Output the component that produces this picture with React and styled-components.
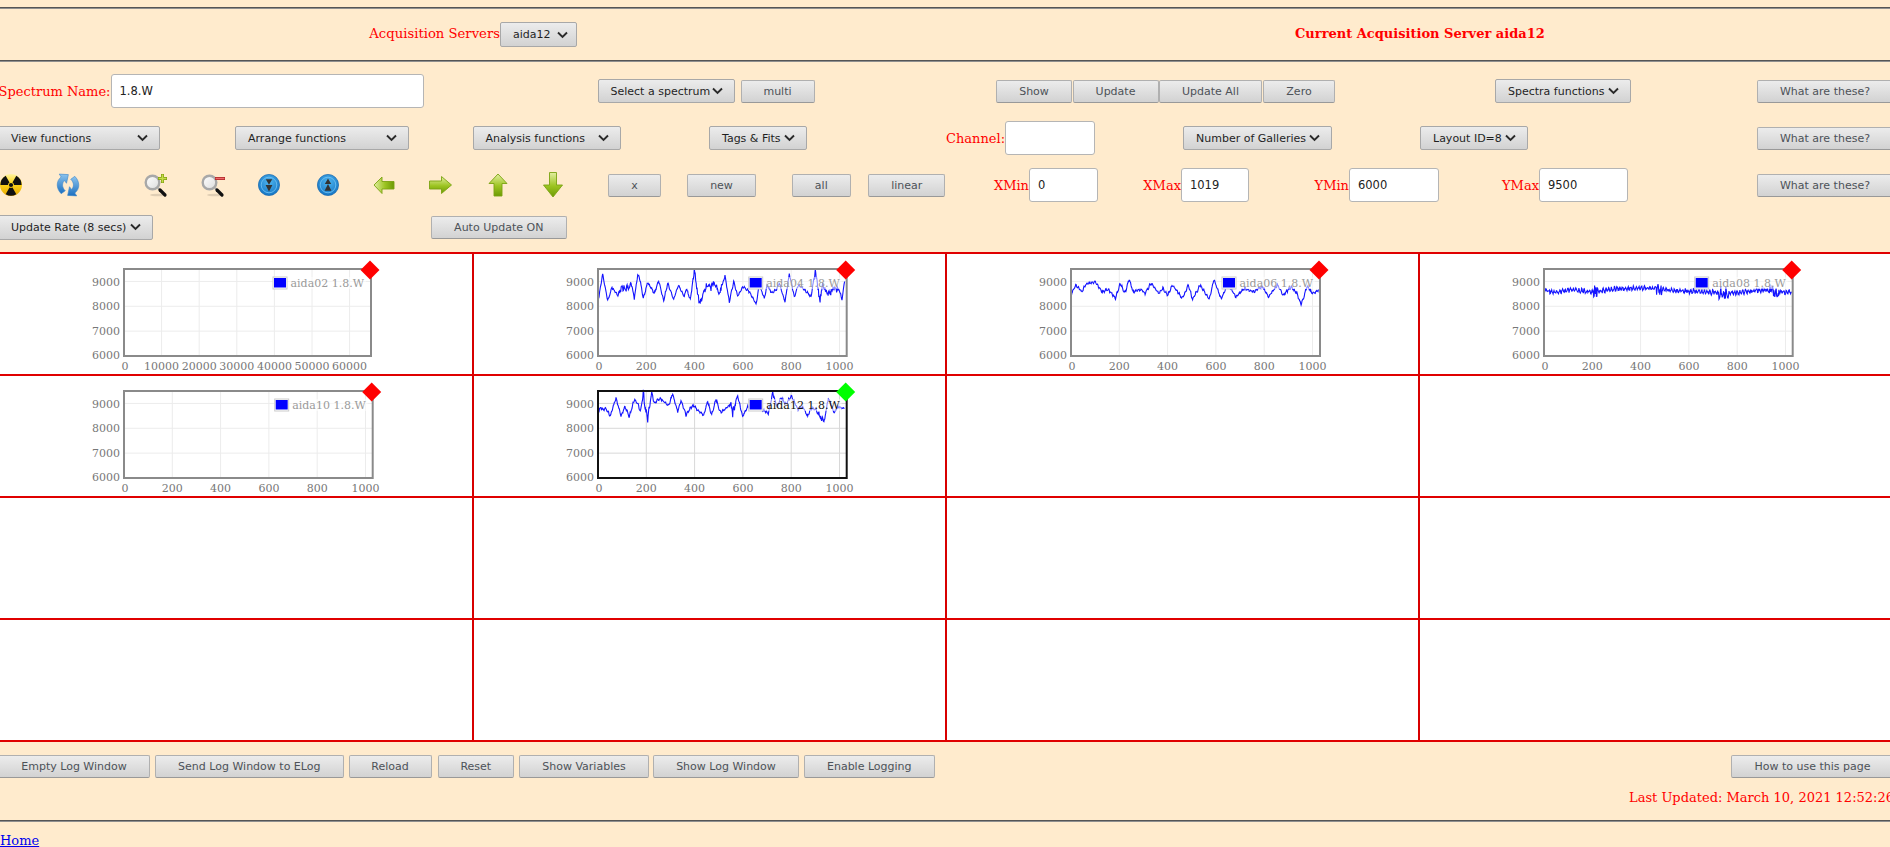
import styled, { createGlobalStyle } from 'styled-components'

const GlobalStyle = createGlobalStyle`
  html, body { margin: 0; padding: 0; background: #ffebcd; overflow: hidden; }
  * { box-sizing: border-box; }
`

const Page = styled.div`
  width: 1890px;
  height: 847px;
  overflow: hidden;
  padding-top: 7px;
  background: #ffebcd;
  font-family: 'DejaVu Serif', serif;
`
const Rule = styled.hr`
  margin: 0;
  width: 100%;
  height: 2px;
  border: 0;
  border-top: 1px solid #555;
  border-bottom: 1px solid #8f8f8f;
`
const Row = styled.div`
  display: grid;
  grid-template-columns: ${(p) => p.$cols};
  align-items: center;
  height: ${(p) => p.$h}px;
  margin-left: -2px;
  width: 1892px;
`
const Toolbar = styled.div`
  display: flex;
  flex-direction: column;
  gap: 13px;
  padding: 12px 0 13px;
`
const Field = styled.label`
  display: flex;
  align-items: center;
`
const Label = styled.span`
  width: ${(p) => p.$w}px;
  flex: none;
  text-align: right;
  white-space: nowrap;
  color: #ff0000;
  font-size: 13px;
`
const ServerLabel = styled(Label)`
  width: auto;
  margin-top: -2px;
  font-size: 13.2px;
`
const CurrentServer = styled.span`
  margin-top: -2px;
  color: #ff0000;
  font-size: 13px;
  font-weight: bold;
  white-space: nowrap;
`
const Input = styled.input`
  width: ${(p) => p.$w}px;
  height: 33.5px;
  flex: none;
  padding: 0 8px;
  border: 1px solid #b5b5b5;
  border-radius: 3px;
  background: #fff;
  color: #222;
  font-family: 'DejaVu Sans', sans-serif;
  font-size: 11.5px;
  outline: none;
`
const Btn = styled.button`
  width: ${(p) => p.$w}px;
  height: ${(p) => p.$h || 23}px;
  padding: 0;
  border: 1px solid #b0b0b0;
  border-bottom-color: #999;
  border-radius: 2px;
  background: linear-gradient(#ececec, #d2d2d2);
  color: #4d5258;
  font-family: 'DejaVu Sans', sans-serif;
  font-size: 11px;
  white-space: nowrap;
  text-align: center;
`
const Dropdown = styled(Btn)`
  display: flex;
  align-items: center;
  justify-content: space-between;
  height: 24.5px;
  padding: 0 ${(p) => p.$pr || 11}px 0 ${(p) => p.$pl || 12}px;
  color: #1f1f1f;
  border-color: #a8a8a8;
  svg { flex: none; }
`
const IconSlot = styled.div`
  width: 26px;
  height: 26px;
  svg { display: block; }
`
const Board = styled.div`
  display: grid;
  grid-template-columns: 474px 473px 473px 472px;
  grid-auto-rows: 122px;
  background: #fff;
  border-bottom: 2px solid #e00000;
`
const Cell = styled.div`
  border-top: 2px solid #e00000;
  border-right: 2px solid #d80000;
  padding: 14px 0 0 84px;
  &:nth-child(4n) { border-right: 0; }
  svg { display: block; overflow: visible; }
`
const Footer = styled.div`
  padding-top: 13px;
`
const Updated = styled.div`
  height: 20px;
  margin: 10px 0 12px 1629px;
  line-height: 20px;
  color: #ff0000;
  font-size: 13px;
  white-space: nowrap;
`
const HomeLine = styled.div`
  padding-top: 10px;
  font-size: 13px;
  line-height: 17px;
`
const HomeLink = styled.a`
  color: #0000ee;
  text-decoration: underline;
`

const cols = (...x) => x.slice(1).map((v, i) => `${v - x[i]}px`).join(' ') + ' 1fr'

// charts

const noise = (i) => {
  const s = Math.sin(i * 12.9898) * 43758.5453
  return s - Math.floor(s) - 0.5
}

// control points are read off the reference in plot pixels
const trace = (points, amp, bursts = []) => {
  const out = []
  for (let k = 0; k < points.length - 1; k++) {
    const [x0, y0] = points[k]
    const [x1, y1] = points[k + 1]
    const n = Math.max(2, Math.round((x1 - x0) / 0.45))
    for (let j = 0; j < n; j++) {
      const x = x0 + ((x1 - x0) * j) / n
      const y = y0 + ((y1 - y0) * j) / n
      const hit = bursts.some(([a, b]) => x >= a && x <= b)
      const idx = out.length + k * 7
      const ripple = Math.sin(x * 2.3) * amp * 0.5
      out.push(`${x.toFixed(1)},${(y + ripple + noise(idx) * (hit ? amp * 4 : amp)).toFixed(1)}`)
    }
  }
  return out.join(' ')
}

const aida04 = [[353,145],[365,72],[380,152],[393,112],[412,140],[422,112],[445,115],[450,97],[460,145],[470,75],[476,85],[487,145],[500,97],[520,130],[533,92],[548,152],[560,100],[578,148],[592,105],[610,140],[616,115],[628,148],[640,60],[655,160],[672,122],[680,100],[690,115],[700,95],[715,130],[732,77],[745,155],[758,95],[770,138],[787,110],[805,125],[825,162],[835,105],[850,145],[858,105],[872,128],[885,120],[895,100],[912,155],[925,72],[940,140],[952,105],[965,115],[990,140],[1003,60],[1016,155],[1025,105],[1040,135],[1060,115],[1075,120],[1083,148],[1092,85]]
  .map(([x, y]) => [(x - 351) / 3, (y - 57) / 3 + 1])
const aida12 = [[353,482],[360,473],[368,480],[375,475],[388,498],[405,445],[420,498],[432,470],[445,500],[460,448],[470,460],[478,485],[487,432],[492,470],[500,505],[512,427],[520,460],[535,445],[550,455],[562,468],[575,432],[590,485],[600,450],[615,495],[635,465],[650,480],[668,495],[680,455],[692,495],[705,447],[718,487],[735,475],[750,460],[755,490],[770,437],[785,500],[800,470],[815,465],[830,470],[862,490],[875,428],[888,470],[900,443],[915,462],[932,437],[950,478],[965,470],[980,500],[990,475],[1005,478],[1015,500],[1030,512],[1042,445],[1060,490],[1070,470],[1092,475]]
  .map(([x, y]) => [(x - 351) / 3, (y - 423) / 3 + 1])
const aida06 = [[187,135],[195,105],[205,125],[212,103],[228,97],[240,125],[250,118],[262,145],[270,100],[278,130],[285,88],[292,125],[305,118],[312,130],[322,100],[335,130],[342,115],[350,135],[358,105],[375,145],[385,105],[392,148],[405,105],[420,148],[428,88],[440,145],[452,105],[465,140],[480,115],[495,125],[510,110],[520,140],[535,105],[545,135],[558,110],[568,130],[575,165],[585,110],[595,130],[605,120]]
  .map(([x, y]) => [(x - 187) * 0.593, (y - 57) / 3 + 1])
const aida08 = [[0,22],[10,24],[30,22],[47,24],[70,21],[100,20],[118,21],[140,23],[165,24],[180,25],[200,24],[220,22],[248,25]]

const thousands = [200, 400, 600, 800, 1000]
const wide = [10000, 20000, 30000, 40000, 50000, 60000]

// the lowest label sits inside the axis, so the labels are not evenly on their ticks
const yTicks = [
  { value: 9000, nudge: 1 },
  { value: 8000, nudge: 0.7 },
  { value: 7000, nudge: 0 },
  { value: 6000, nudge: -1 },
]

const Chart = ({ name, width = 248.7, ticks = thousands, scale = 0.2415, line, selected, grid = '#ececec' }) => {
  const y = (v) => 1 + (87 * (9500 - v)) / 3500
  const ox = 40
  const frame = selected ? '#111' : '#8a8a8a'
  const lines = selected ? '#d8d8d8' : grid
  const labelColor = selected ? '#111' : '#9a9a9a'
  return (
    <svg width="330" height="108" viewBox="0 0 330 108" fontFamily="'DejaVu Serif', serif" fontSize="11">
      <g transform={`translate(${ox} 0)`}>
        {yTicks.slice(0, 3).map(({ value }) => (
          <line key={value} x1="0" x2={width} y1={y(value)} y2={y(value)} stroke={lines} strokeWidth="1" />
        ))}
        {ticks.map((t) => (
          <line key={t} x1={t * scale} x2={t * scale} y1="1" y2="88" stroke={lines} strokeWidth="1" />
        ))}
        {yTicks.map(({ value, nudge }) => (
          <text key={value} x="-4" y={y(value) + nudge} textAnchor="end" dominantBaseline="central" fill="#777">{value}</text>
        ))}
        <text x="1" y="98" textAnchor="middle" dominantBaseline="central" fill="#777">0</text>
        {ticks.map((t) => (
          <text key={t} x={t * scale} y="98" textAnchor="middle" dominantBaseline="central" fill="#777">{t}</text>
        ))}
        {line && <polyline points={line} fill="none" stroke="#1414ff" strokeWidth="1.1" />}
        <rect x={width - 98} y="9" width="93" height="12" fill="#fff" opacity="0.5" />
        <rect x={width - 98} y="9" width="14" height="12" fill="#fff" stroke="#ccc" strokeWidth="1" />
        <rect x={width - 97} y="10" width="12" height="9.5" fill="#0000ff" />
        <text x={width - 7} y="15" textAnchor="end" dominantBaseline="central" fill={labelColor}>{name}</text>
        <rect x="0" y="1" width={width} height="87" fill="none" stroke={frame} strokeWidth="2" />
        <polygon
          points={`${width - 1},-7.5 ${width + 8.5},2 ${width - 1},11.5 ${width - 10.5},2`}
          fill={selected ? '#00ff00' : '#ff0000'}
        />
      </g>
    </svg>
  )
}

// toolbar icons

const GreenArrow = ({ d, id, x2, y2 }) => (
  <svg width="26" height="26" viewBox="0 0 26 26">
    <defs>
      <linearGradient id={id} x1="0" y1="0" x2={x2} y2={y2}>
        <stop offset="0" stopColor="#e3eea0" />
        <stop offset="0.55" stopColor="#9cc421" />
        <stop offset="1" stopColor="#6d9a05" />
      </linearGradient>
    </defs>
    <path d={d} fill={`url(#${id})`} stroke="#7ba312" strokeWidth="0.9" strokeLinejoin="round" />
  </svg>
)

const BlueDisc = ({ id, up }) => (
  <svg width="26" height="26" viewBox="0 0 26 26">
    <defs>
      <radialGradient id={id} cx="0.5" cy="0.35" r="0.7">
        <stop offset="0" stopColor="#4fb6f0" />
        <stop offset="1" stopColor="#0f6fc0" />
      </radialGradient>
    </defs>
    <circle cx="13" cy="13" r="10.6" fill={`url(#${id})`} stroke="#1a68ad" strokeWidth="0.7" />
    <circle cx="13" cy="13" r="7.8" fill="none" stroke="#75c4f2" strokeWidth="0.8" />
    {up ? (
      <path d="M13 6.5l3.2 5.6h-6.4zM13 12l3.4 6.8h-6.8z" fill="#333" />
    ) : (
      <path d="M9.8 7.2h6.4L13 12.8zM9.6 13h6.8L13 19.5z" fill="#333" />
    )}
  </svg>
)

const Magnifier = ({ children, id }) => (
  <svg width="26" height="26" viewBox="0 0 26 26">
    <defs>
      <linearGradient id={id} x1="0" y1="0" x2="1" y2="1">
        <stop offset="0" stopColor="#fff" />
        <stop offset="1" stopColor="#dcdcdc" />
      </linearGradient>
    </defs>
    <ellipse cx="15" cy="23" rx="8" ry="1.3" fill="#000" opacity="0.12" />
    <circle cx="9.5" cy="10.5" r="6.8" fill={`url(#${id})`} stroke="#a8a8a8" strokeWidth="2.4" />
    <path d="M15 16l2 2" stroke="#aaa" strokeWidth="2.2" />
    <path d="M17 18l5 5" stroke="#111" strokeWidth="3.2" strokeLinecap="round" />
    {children}
  </svg>
)

const blade = (deg) => {
  const r = (a) => (a * Math.PI) / 180
  const p = (rad, a) => `${(13 + rad * Math.cos(r(a))).toFixed(2)} ${(13 + rad * Math.sin(r(a))).toFixed(2)}`
  return `M${p(3, deg - 30)}L${p(10.6, deg - 30)}A10.6 10.6 0 0 1 ${p(10.6, deg + 30)}L${p(3, deg + 30)}A3 3 0 0 0 ${p(3, deg - 30)}Z`
}

const Radiation = () => (
  <svg width="26" height="26" viewBox="0 0 26 26">
    <defs>
      <linearGradient id="radYellow" x1="0" y1="0" x2="0" y2="1">
        <stop offset="0" stopColor="#fff2a0" />
        <stop offset="0.4" stopColor="#ffd91f" />
        <stop offset="1" stopColor="#e8a800" />
      </linearGradient>
    </defs>
    <circle cx="13" cy="13" r="11" fill="url(#radYellow)" />
    <path d={blade(90)} fill="#111" />
    <path d={blade(210)} fill="#111" />
    <path d={blade(330)} fill="#111" />
    <circle cx="13" cy="13" r="2.1" fill="#111" />
  </svg>
)

const Refresh = () => (
  <svg width="26" height="26" viewBox="2.5 2.5 21 21">
    <defs>
      <linearGradient id="refreshBlue" x1="0" y1="0" x2="0" y2="1">
        <stop offset="0" stopColor="#8cc4ee" />
        <stop offset="1" stopColor="#1b6fc0" />
      </linearGradient>
    </defs>
    <path d="M7.5 20C3.5 16 3 10 7.5 6.5l-1.6-2.3 7.4.4-1.5 7-1.7-2.2C8 11.5 8 15 10.8 17.6z" fill="url(#refreshBlue)" stroke="#3d86c9" strokeWidth="0.5" />
    <path d="M18.5 6C22.5 10 23 16 18.5 19.5l1.6 2.3-7.4-.4 1.5-7 1.7 2.2c2.1-2.1 2.1-5.6-.7-8.2z" fill="url(#refreshBlue)" stroke="#3d86c9" strokeWidth="0.5" />
  </svg>
)

const icons = [
  <Radiation key="rad" />,
  <Refresh key="refresh" />,
  <Magnifier key="in" id="glassIn">
    <path d="M19.5 2v9M15 6.5h9" stroke="#7f9f10" strokeWidth="3" />
    <path d="M19.5 2.6v7.8M15.6 6.5h7.8" stroke="#c6dc4a" strokeWidth="1.6" />
  </Magnifier>,
  <Magnifier key="out" id="glassOut">
    <path d="M15 6.5h10" stroke="#b02a2a" strokeWidth="3" />
    <path d="M15.6 6.5h8.8" stroke="#ef6a6a" strokeWidth="1.4" />
  </Magnifier>,
  <BlueDisc key="down" id="discDown" />,
  <BlueDisc key="up" id="discUp" up />,
  <GreenArrow key="al" id="arrowLeft" x2="1" y2="0" d="M3 13l8-8v4.5h12v7.5H11v4.5z" />,
  <GreenArrow key="ar" id="arrowRight" x2="0" y2="1" d="M1.5 9h12V4.5l10 8.5-10 8.5V17h-12z" />,
  <GreenArrow key="au" id="arrowUp" x2="0" y2="1" d="M13 2l9 9.5h-5V24H9V11.5H4z" />,
  <GreenArrow key="ad" id="arrowDown" x2="0" y2="1" d="M9.5 0.5h7v12.5h6L13 25 3.5 13h6z" />,
]

const Caret = () => (
  <svg width="11" height="8" viewBox="0 0 11 8">
    <polyline points="1,1.5 5.5,6 10,1.5" fill="none" stroke="#2a2a2a" strokeWidth="1.9" />
  </svg>
)

const App = () => (
  <Page>
    <GlobalStyle />
    <Rule />
    <Row $h={51} $cols={cols(0, 369, 502, 1297, 1892)}>
      <span />
      <ServerLabel>Acquisition Servers</ServerLabel>
      <Dropdown $w={76.5} $pl={12} $pr={8}>aida12<Caret /></Dropdown>
      <CurrentServer>Current Acquisition Server aida12</CurrentServer>
    </Row>
    <Rule />
    <Toolbar>
      <Row $h={34} $cols={cols(0, 599.5, 742.5, 998, 1074.5, 1161, 1265, 1497, 1759)}>
        <Field>
          <Label $w={112.5}>Spectrum Name:</Label>
          <Input $w={313} defaultValue="1.8.W" />
        </Field>
        <Dropdown $w={137.5}>Select a spectrum<Caret /></Dropdown>
        <Btn $w={74}>multi</Btn>
        <Btn $w={76}>Show</Btn>
        <Btn $w={86}>Update</Btn>
        <Btn $w={103}>Update All</Btn>
        <Btn $w={72}>Zero</Btn>
        <Dropdown $w={135.5}>Spectra functions<Caret /></Dropdown>
        <Btn $w={136}>What are these?</Btn>
      </Row>
      <Row $h={34} $cols={cols(0, 237, 474.5, 711, 948, 1185, 1422, 1759)}>
        <Dropdown $w={161.5}>View functions<Caret /></Dropdown>
        <Dropdown $w={173.6}>Arrange functions<Caret /></Dropdown>
        <Dropdown $w={148}>Analysis functions<Caret /></Dropdown>
        <Dropdown $w={98}>{'Tags & Fits'}<Caret /></Dropdown>
        <Field>
          <Label $w={59}>Channel:</Label>
          <Input $w={89.5} />
        </Field>
        <Dropdown $w={148.5}>Number of Galleries<Caret /></Dropdown>
        <Dropdown $w={107.6}>Layout ID=8<Caret /></Dropdown>
        <Btn $w={136}>What are these?</Btn>
      </Row>
      <Row
        $h={34}
        $cols={cols(0, 56.5, 145, 202, 258, 316.5, 373, 430, 487, 542, 610, 689, 794, 870, 995.6, 1145, 1316, 1503, 1759)}
      >
        {icons.map((icon) => (
          <IconSlot key={icon.key}>{icon}</IconSlot>
        ))}
        <Btn $w={53}>x</Btn>
        <Btn $w={69}>new</Btn>
        <Btn $w={58.6}>all</Btn>
        <Btn $w={77.4}>linear</Btn>
        <Field>
          <Label $w={35.4}>XMin</Label>
          <Input $w={68.7} defaultValue="0" />
        </Field>
        <Field>
          <Label $w={38}>XMax</Label>
          <Input $w={67.7} defaultValue="1019" />
        </Field>
        <Field>
          <Label $w={35}>YMin</Label>
          <Input $w={90} defaultValue="6000" />
        </Field>
        <Field>
          <Label $w={38}>YMax</Label>
          <Input $w={88.6} defaultValue="9500" />
        </Field>
        <Btn $w={136}>What are these?</Btn>
      </Row>
      <Row $h={24} $cols={cols(0, 433, 1892)}>
        <Dropdown $w={154.7}>Update Rate (8 secs)<Caret /></Dropdown>
        <Btn $w={135.5}>Auto Update ON</Btn>
      </Row>
    </Toolbar>
    <Board>
      <Cell>
        <Chart name="aida02 1.8.W" width={247} ticks={wide} scale={0.00376} />
      </Cell>
      <Cell>
        <Chart name="aida04 1.8.W" line={trace(aida04, 1.6, [[20, 30], [95, 125], [215, 240]])} />
      </Cell>
      <Cell>
        <Chart name="aida06 1.8.W" width={249} line={trace(aida06, 1.8)} />
      </Cell>
      <Cell>
        <Chart name="aida08 1.8.W" line={trace(aida08, 3, [[49, 54], [112, 118], [175, 185], [225, 235]])} />
      </Cell>
      <Cell>
        <Chart name="aida10 1.8.W" />
      </Cell>
      <Cell>
        <Chart name="aida12 1.8.W" selected line={trace(aida12, 1.8, [[45, 52], [133, 138], [220, 228]])} />
      </Cell>
      <Cell />
      <Cell />
      {Array.from({ length: 8 }, (_, i) => (
        <Cell key={i} />
      ))}
    </Board>
    <Footer>
      <Row $h={23} $cols={cols(0, 157, 350.5, 439.6, 521, 655, 805.6, 1733)}>
        <Btn $w={152}>Empty Log Window</Btn>
        <Btn $w={188.6}>Send Log Window to ELog</Btn>
        <Btn $w={83}>Reload</Btn>
        <Btn $w={76.4}>Reset</Btn>
        <Btn $w={130}>Show Variables</Btn>
        <Btn $w={146}>Show Log Window</Btn>
        <Btn $w={131.4}>Enable Logging</Btn>
        <Btn $w={163}>How to use this page</Btn>
      </Row>
      <Updated>Last Updated: March 10, 2021 12:52:26</Updated>
      <Rule />
      <HomeLine>
        <HomeLink href="#home">Home</HomeLink>
      </HomeLine>
    </Footer>
  </Page>
)

export default App
